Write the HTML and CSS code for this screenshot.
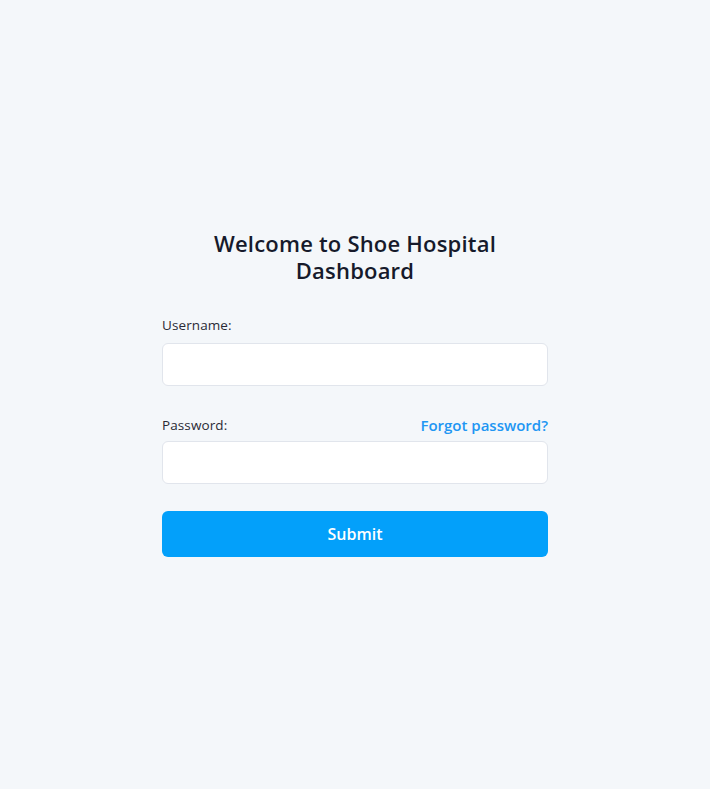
FILE: index.html
```html
<!DOCTYPE html>
<html>
<head>
<meta charset="utf-8">
<link rel="stylesheet" href="styles.css">
</head>
<body>
<main class="page">
  <form class="login">
    <h1 class="title">Welcome to Shoe Hospital<br>Dashboard</h1>
    <div class="field">
      <div class="label-row"><label class="label">Username:</label></div>
      <input class="input" type="text">
    </div>
    <div class="field field-last">
      <div class="label-row"><label class="label">Password:</label><a class="forgot" href="#">Forgot password?</a></div>
      <input class="input" type="password">
    </div>
    <button class="submit" type="button">Submit</button>
  </form>
</main>
</body>
</html>
```
FILE: styles.css
```css
* { box-sizing: border-box; }
html, body { margin: 0; padding: 0; }
body {
  background: #f4f7fa;
  font-family: "Open Sans", "Noto Sans", sans-serif;
  color: #1a1a2e;
}
.page {
  min-height: 100vh;
  display: flex;
  align-items: center;
  justify-content: center;
}
.login {
  width: 386px;
  display: flex;
  flex-direction: column;
  padding-bottom: 3px;
}
.title {
  margin: 0 0 32px;
  text-align: center;
  font-size: 22px;
  line-height: 27px;
  font-weight: 600;
  color: #161a2b;
  letter-spacing: 0.2px;
}
.field {
  display: flex;
  flex-direction: column;
  margin-bottom: 28px;
}
.field-last {
  margin-bottom: 27px;
}
.label-row {
  display: flex;
  justify-content: space-between;
  align-items: baseline;
  height: 20px;
  margin-bottom: 7px;
}
.label {
  font-size: 13.5px;
  letter-spacing: 0.1px;
  color: #2a2a35;
}
.forgot {
  font-size: 15px;
  font-weight: 600;
  color: #2196f3;
  text-decoration: none;
  position: relative;
  top: 1px;
}
.input {
  height: 43px;
  border: 1px solid #e1e5ec;
  border-radius: 6px;
  background: #fff;
  font-size: 14px;
  padding: 0 12px;
}
.submit {
  height: 46px;
  border: none;
  border-radius: 6px;
  background: #03a0fa;
  color: #fff;
  font-family: inherit;
  font-size: 16px;
  font-weight: 600;
}
```
